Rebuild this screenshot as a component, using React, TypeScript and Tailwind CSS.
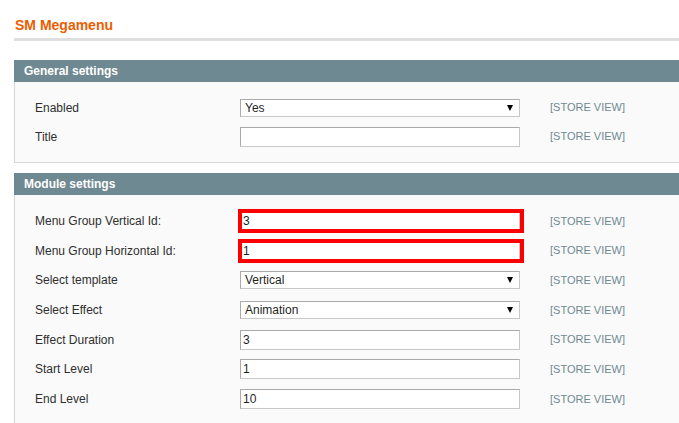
import React from "react";

type Field = {
  label: string;
  kind: "select" | "text" | "marked";
  value: string;
};

const general: Field[] = [
  { label: "Enabled", kind: "select", value: "Yes" },
  { label: "Title", kind: "text", value: "" },
];

const module: Field[] = [
  { label: "Menu Group Vertical Id:", kind: "marked", value: "3" },
  { label: "Menu Group Horizontal Id:", kind: "marked", value: "1" },
  { label: "Select template", kind: "select", value: "Vertical" },
  { label: "Select Effect", kind: "select", value: "Animation" },
  { label: "Effect Duration", kind: "text", value: "3" },
  { label: "Start Level", kind: "text", value: "1" },
  { label: "End Level", kind: "text", value: "10" },
];

function Control({ field }: { field: Field }) {
  if (field.kind === "marked") {
    // red highlight drawn around the input, it spills 2-4px past the normal box
    return (
      <div className="ml-[-2px] mr-[-4px] flex h-[24px] w-[286px] border-4 border-[#ff0000]">
        <div className="flex flex-1 items-center bg-white pl-[1px] text-[12px] text-[#1f1f1f] border-r border-[#c8c8c8]">
          {field.value}
        </div>
      </div>
    );
  }
  if (field.kind === "select") {
    return (
      <div className="flex h-[18px] w-[280px] items-center justify-between border border-[#aaa] border-r-[#c8c8c8] border-b-[#c8c8c8] bg-white pl-[4px] pr-[6px] text-[12px] text-[#1f1f1f]">
        <span>{field.value}</span>
        <span className="h-0 w-0 border-x-[3.5px] border-t-[6px] border-x-transparent border-t-black" />
      </div>
    );
  }
  return (
    <div className="flex h-[20px] w-[280px] items-center border border-[#aaa] border-r-[#c8c8c8] border-b-[#c8c8c8] bg-white pl-[2px] text-[12px] text-[#1f1f1f]">
      {field.value}
    </div>
  );
}

function Row({ field, height }: { field: Field; height: string }) {
  return (
    <div className={`flex items-center ${height}`}>
      <div className="w-[205px] text-[12px] text-[#2f2f2f]">{field.label}</div>
      <Control field={field} />
      <div className="ml-[30px] text-[11px] text-[#6f8992]">[STORE VIEW]</div>
    </div>
  );
}

function Section({
  title,
  fields,
  rowHeight,
}: {
  title: string;
  fields: Field[];
  rowHeight: string;
}) {
  return (
    <div>
      <div className="flex h-[22px] items-center bg-[#6f8992] pl-[10px] text-[12px] font-bold text-white">
        {title}
      </div>
      <div className="border-l border-b border-[#d6d6d6] bg-[#fafafa] pl-[20px] pt-[11px] pb-[11px]">
        {fields.map((f) => (
          <Row key={f.label} field={f} height={rowHeight} />
        ))}
      </div>
    </div>
  );
}

export default function App() {
  return (
    <div
      className="h-[423px] w-[679px] overflow-hidden bg-white"
      style={{ fontFamily: '"Liberation Sans", Arial, sans-serif' }}
    >
      <div className="ml-[14px] w-[700px]">
        <h3 className="mt-[17px] pl-[1px] text-[14px] leading-[16px] font-bold text-[#eb5e00]">
          SM Megamenu
        </h3>
        <div className="mt-[5px] h-[3px] bg-[#dfdfdf]" />
        <div className="mt-[19px]">
          <Section title="General settings" fields={general} rowHeight="h-[29px]" />
        </div>
        <div className="mt-[10px]">
          <Section title="Module settings" fields={module} rowHeight="h-[29.7px]" />
        </div>
      </div>
    </div>
  );
}
